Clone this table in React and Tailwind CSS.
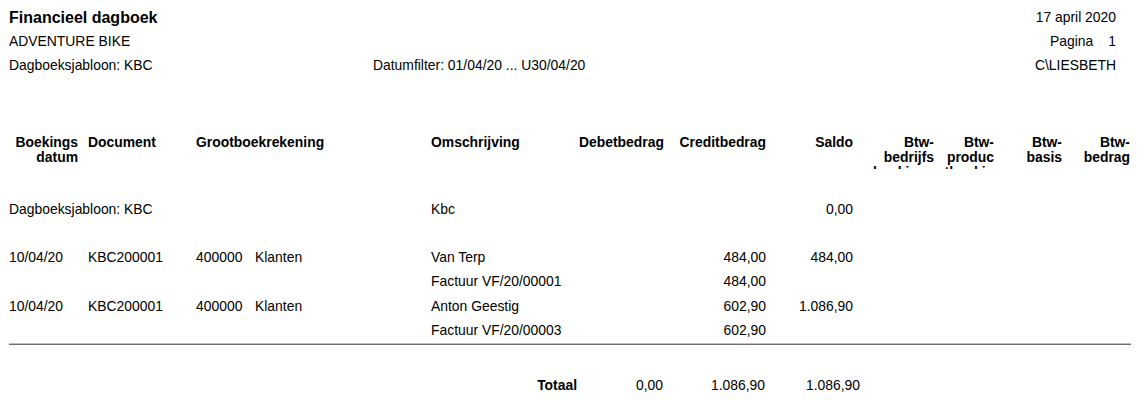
// App.jsx
import React from "react";

const cols =
  "grid grid-cols-[74px_113px_235px_148px_84px_103px_87px_81px_60px_68px_68px]";

const rows = [
  { date: "10/04/20", doc: "KBC200001", acc: "400000", name: "Klanten", desc: "Van Terp", credit: "484,00", saldo: "484,00" },
  { desc: "Factuur VF/20/00001", credit: "484,00" },
  { date: "10/04/20", doc: "KBC200001", acc: "400000", name: "Klanten", desc: "Anton Geestig", credit: "602,90", saldo: "1.086,90" },
  { desc: "Factuur VF/20/00003", credit: "602,90" },
];

const BtwHead = ({ a, b, c }) => (
  <div className="h-[34px] overflow-hidden text-right leading-[15px] whitespace-nowrap">
    <div>{a}</div>
    <div>{b}</div>
    <div>{c}</div>
  </div>
);

export default function App() {
  return (
    <div className="w-[1144px] h-[400px] bg-white text-black text-[13.9px] font-['Liberation_Sans',Arial,sans-serif] overflow-hidden">
      {/* report header */}
      <div className="pt-[6px] pl-[9px] pr-[28px]">
        <div className="h-[24px] flex items-center justify-between leading-none">
          <span className="text-[16px] font-bold">Financieel dagboek</span>
          <span>17 april 2020</span>
        </div>
        <div className="h-[24px] flex items-center justify-between leading-none">
          <span>ADVENTURE BIKE</span>
          <span className="flex gap-[15px]">
            <span>Pagina</span>
            <span>1</span>
          </span>
        </div>
        <div className="h-[23px] grid grid-cols-[364px_1fr_auto] items-center leading-none">
          <span>Dagboeksjabloon: KBC</span>
          <span>Datumfilter: 01/04/20 ... U30/04/20</span>
          <span>C\LIESBETH</span>
        </div>
      </div>

      {/* column headings */}
      <div className={`${cols} pl-[9px] mt-[58px] font-bold leading-[15px]`}>
        <div className="h-[34px] pr-[5px] text-right">
          <div>Boekings</div>
          <div>datum</div>
        </div>
        <div className="pl-[5px]">Document</div>
        <div>Grootboekrekening</div>
        <div>Omschrijving</div>
        <div className="text-right">Debetbedrag</div>
        <div className="text-right">Creditbedrag</div>
        <div className="text-right">Saldo</div>
        <BtwHead a="Btw-" b="bedrijfs" c="boekings" />
        <BtwHead a="Btw-" b="produc" c="tboekin" />
        <BtwHead a="Btw-" b="basis" c="" />
        <BtwHead a="Btw-" b="bedrag" c="" />
      </div>

      {/* body */}
      <div className="pl-[9px] mt-[28px]">
        <div className={`${cols} h-[24px] items-center`}>
          <div className="col-span-3">Dagboeksjabloon: KBC</div>
          <div>Kbc</div>
          <div />
          <div />
          <div className="text-right">0,00</div>
        </div>
        <div className="h-[24px]" />
        {rows.map((r, i) => (
          <div key={i} className={`${cols} h-[24.5px] items-center`}>
            <div>{r.date}</div>
            <div className="pl-[5px]">{r.doc}</div>
            <div className="flex">
              {r.acc && <span className="w-[59px]">{r.acc}</span>}
              <span>{r.name}</span>
            </div>
            <div className="whitespace-nowrap">{r.desc}</div>
            <div />
            <div className="text-right">{r.credit}</div>
            <div className="text-right">{r.saldo}</div>
          </div>
        ))}
      </div>

      <div className="ml-[9px] w-[1122px] border-t border-[#c0c0c0] border-b border-b-[#707070]" />

      {/* totals */}
      <div className={`${cols} pl-[9px] mt-[28px] h-[24px] items-center`}>
        <div />
        <div />
        <div />
        <div className="text-right pr-[2px] font-bold">Totaal</div>
        <div className="text-right">0,00</div>
        <div className="text-right pr-[1px]">1.086,90</div>
        <div className="text-right -mr-[7px]">1.086,90</div>
      </div>
    </div>
  );
}
